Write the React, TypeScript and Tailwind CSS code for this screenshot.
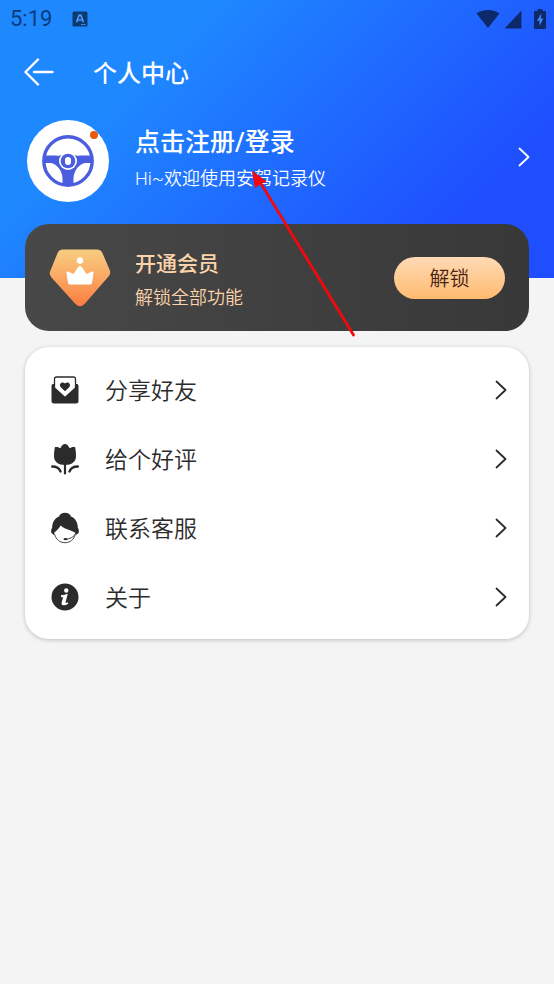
import type { ReactNode } from "react";

function Chevron({ className }: { className: string }) {
  return (
    <svg className={className} width="12" height="20" viewBox="0 0 12 20" fill="none" stroke="currentColor" strokeWidth="1.8" strokeLinecap="round" strokeLinejoin="round" aria-hidden="true">
      <path d="M1.500 1.500 10.500 10 1.500 18.500" />
    </svg>
  );
}

function StatusBar() {
  return (
    <div className="flex h-9 items-center justify-between pt-0.5 pr-2.5 pl-2.5 text-[#0c3b7c]">
      <div className="flex items-center gap-5">
        <span className="font-['Roboto',sans-serif] text-[22px] leading-7">5:19</span>
        <svg width="16" height="16" viewBox="0 0 16 16" aria-hidden="true">
          <rect x="0.500" y="0.500" width="15" height="15" rx="1.500" fill="#0b3a73" />
          <path d="M4.500 11.300 7.200 4h1.600l2.700 7.300M6 9h4" fill="none" stroke="#4b9bf5" strokeWidth="1.700" />
          <path d="M9 13.600h4.500" stroke="#4b9bf5" strokeWidth="0.900" />
        </svg>
      </div>
      <div className="-mr-0.5 flex items-center gap-1 text-[#0c2a6b]">
        <svg width="24" height="20" viewBox="0 0 24 20" fill="currentColor" aria-hidden="true">
          <path d="M0.500 4.500C6-0.200 18-0.200 23.500 4.500L12 19Z" />
        </svg>
        <svg width="18" height="19" viewBox="0 0 18 19" fill="currentColor" aria-hidden="true">
          <path d="M17.500 0.500v18H0.500Z" />
        </svg>
        <svg className="ml-2" width="12" height="20" viewBox="0 0 12 20" aria-hidden="true">
          <path d="M3.500 0h5v2H11q1 0 1 1v16q0 1-1 1H1q-1 0-1-1V3q0-1 1-1h2.500Z" fill="currentColor" />
          <path d="M7.300 4.500 3 11.800h2.500v5L9.400 9.500H6.900Z" fill="#4a83f5" />
        </svg>
      </div>
    </div>
  );
}

function Avatar() {
  return (
    <svg className="shrink-0" width="82" height="82" viewBox="0 0 82 82" aria-hidden="true">
      <circle cx="41" cy="41" r="41" fill="#fff" />
      <circle cx="41" cy="41" r="24.200" fill="none" stroke="#4a5ddf" strokeWidth="3.400" />
      <path d="M17 35.500h8c5 0 8 1 12-1.500q4-2 8 0c4 2.500 7 1.500 12 1.500h8v7.500h-6C53 43 47 50 46.500 58v8h-11v-8C35 50 29 43 23 43h-6Z" fill="#4a5ddf" />
      <circle cx="41" cy="41" r="9" fill="#fff" />
      <circle cx="41" cy="41" r="7.300" fill="#4a5ddf" />
      <rect x="38" y="37" width="6" height="8" rx="3" fill="#fff" />
      <circle cx="67" cy="15" r="4" fill="#e8590c" />
    </svg>
  );
}

function MemberBadge() {
  return (
    <svg className="shrink-0" width="62" height="58" viewBox="0 0 62 58" aria-hidden="true">
      <defs>
        <linearGradient id="badge" x1="0" y1="0" x2="0" y2="1">
          <stop offset="0" stopColor="#f7ce80" />
          <stop offset="0.500" stopColor="#fba763" />
          <stop offset="1" stopColor="#f97c3e" />
        </linearGradient>
      </defs>
      <path d="M14 0.500h34q3.500 0 5.200 3L60.500 20.500q1.800 4-1 7L36 54.500q-5 5.500-10 0L2.500 28.500q-3-3.500-1-7L8.800 3.500q1.700-3 5.200-3Z" fill="url(#badge)" />
      <circle cx="31" cy="11.500" r="3.200" fill="#fff" />
      <path d="M31 17q1.200 0 2.200 1.500L37.500 25l5.500-2.400q2-.6 1.500 1.600L43 34q-.5 1.500-2 1.500H21q-1.500 0-2-1.500l-1.500-9.800q-.5-2.200 1.500-1.600L24.500 25l4.300-6.500Q29.800 17 31 17Z" fill="#fff" />
    </svg>
  );
}

const iconProps = { width: 28, height: 32, viewBox: "0 0 28 32", "aria-hidden": true } as const;

const shareIcon = (
  <svg {...iconProps}>
    <path d="M1.500 10Q.5 10.500.5 12.500V27q0 2.500 2.500 2.500h22q2.500 0 2.500-2.500V12.500q0-2-1-2.500Z" fill="#2b2b2b" />
    <path d="M3.500 5q0-2 2-2h17q2 0 2 2v9L14 23.500 3.500 14Z" fill="#fff" stroke="#2b2b2b" strokeWidth="1.300" />
    <path d="M14 17.300 9.800 13.200c-1.800-2-.3-4.600 1.700-4.600 1 0 1.800.3 2.500 1 .7-.7 1.500-1 2.500-1 2 0 3.500 2.600 1.700 4.600Z" fill="#2b2b2b" />
  </svg>
);

const tulipIcon = (
  <svg {...iconProps}>
    <path d="M14 1c2 0 3.600 1.800 4.500 4.200 2-1.200 4-1.500 5.600-1.200q1 5 .9 9.500C24.700 19 20.700 22 14 22S3.300 19 3 13.500Q2.900 9 3.900 4c1.600-.3 3.600 0 5.600 1.200C10.400 2.800 12 1 14 1Z" fill="#2b2b2b" />
    <g fill="none" stroke="#2b2b2b" strokeLinecap="round">
      <path d="M14 21v9.500" strokeWidth="2.200" />
      <path d="M1.200 23.500c4 0 7 1.500 8.300 5M26.800 23.500c-4 0-7 1.500-8.300 5" strokeWidth="2.400" />
    </g>
  </svg>
);

const serviceIcon = (
  <svg {...iconProps}>
    <path d="M14 .8c3 0 5 1.200 6 3.700 4.500 2 6.800 6 6.800 11 1 1.500 1.400 3.500.8 5.500L25 23H3L.4 21c-.6-2-.2-4 .8-5.500 0-5 2.300-9 6.800-11C9 2 11 .8 14 .8Z" fill="#2b2b2b" />
    <path d="M9.500 13.500c4.500 4 10 4.300 15.500 7.500-.5 6-5.300 9.400-11 9.400S3.200 26 3.300 20.500c2.500-1.800 5-4.300 6.200-7Z" fill="#fff" />
    <path d="M3.700 22.500C5 27.500 9 30.700 14 30.700s9-3.200 10.300-8.200" fill="none" stroke="#2b2b2b" strokeWidth="0.900" />
    <path d="M25 20.500c-1.800 4.600-6 6.500-10.500 6.700" fill="none" stroke="#2b2b2b" strokeWidth="0.900" />
    <ellipse cx="14.500" cy="27.100" rx="2" ry="1.200" fill="#2b2b2b" />
  </svg>
);

const aboutIcon = (
  <svg {...iconProps}>
    <circle cx="14" cy="16" r="13.500" fill="#2b2b2b" />
    <circle cx="15.300" cy="9.500" r="2.200" fill="#fff" />
    <path d="M10 14.200q3.500 0 6.800-1.400l-2.300 8.400q-.3 1.200 2.600 0v1.600q-2.600 1.900-4.900 1.500-2.200-.5-1.500-3.100l1.400-5q-1 .2-2.100-.3Z" fill="#fff" />
  </svg>
);

const menu: { label: string; icon: ReactNode }[] = [
  { label: "分享好友", icon: shareIcon },
  { label: "给个好评", icon: tulipIcon },
  { label: "联系客服", icon: serviceIcon },
  { label: "关于", icon: aboutIcon },
];

export default function App() {
  return (
    <div className="relative min-h-screen bg-[#f4f4f4] font-['Noto_Sans_CJK_SC',sans-serif] text-[#2b2b2b]">
      <header className="h-[278px] bg-linear-[135deg] from-[#1e88ff] from-26% via-[#1f6aff] via-54% to-[#1f4eff] to-82% text-white">
        <StatusBar />
        <div className="flex h-[72px] items-center gap-[39px] pl-6">
          <button type="button" aria-label="返回">
            <svg width="30" height="28" viewBox="0 0 30 28" fill="none" stroke="currentColor" strokeWidth="2.400" strokeLinecap="round" strokeLinejoin="round" aria-hidden="true">
              <path d="M14 1.500 1.500 14 14 26.500M10 14h18.500" />
            </svg>
          </button>
          <h1 className="text-2xl font-medium">个人中心</h1>
        </div>
        <button type="button" className="mt-3 flex w-full items-center pr-6 pl-[27px] text-left font-['Roboto','Noto_Sans_CJK_SC',sans-serif]">
          <Avatar />
          <span className="ml-[26px] flex flex-1 flex-col gap-1 pb-1">
            <span className="text-[25px] leading-9 font-medium">点击注册/登录</span>
            <span className="text-[18px] leading-7 font-[350]">Hi~欢迎使用安驾记录仪</span>
          </span>
          <Chevron className="mb-2 text-white" />
        </button>
      </header>

      <main className="-mt-[54px] flex flex-col gap-4 px-[25px]">
        <section className="flex h-[107px] items-center rounded-3xl bg-linear-to-r from-[#484848] to-[#383838] px-6 text-[#fbd3aa]">
          <MemberBadge />
          <div className="ml-6 flex flex-1 flex-col gap-1">
            <h2 className="text-[21px] leading-8 font-medium">开通会员</h2>
            <p className="text-[18px] leading-7 font-[350]">解锁全部功能</p>
          </div>
          <button type="button" className="h-[42px] w-[111px] rounded-full bg-linear-to-b from-[#ffdab5] to-[#ffbb6e] text-[20px] font-[350] text-[#4a2412]">
            解锁
          </button>
        </section>

        <nav className="rounded-3xl bg-white py-2 shadow-[0_1px_4px_rgba(0,0,0,0.22)]">
          <ul>
            {menu.map((item) => (
              <li key={item.label}>
                <button type="button" className="flex h-[69px] w-full items-center pr-[22px] pl-[26px] text-left">
                  {item.icon}
                  <span className="ml-[26px] flex-1 text-[23px] font-[350]">{item.label}</span>
                  <Chevron className="text-[#2b2b2b]" />
                </button>
              </li>
            ))}
          </ul>
        </nav>
      </main>

      <svg className="pointer-events-none absolute top-[170px] left-[250px]" width="108" height="170" viewBox="0 0 108 170" aria-hidden="true">
        <path d="M10 12 103.500 165" stroke="#f5080c" strokeWidth="2.800" strokeLinecap="round" />
        <path d="M2.500 1.500 16 11.500 11 13 5.500 17.500Z" fill="#f5080c" stroke="#f5080c" strokeWidth="1" />
      </svg>
    </div>
  );
}
